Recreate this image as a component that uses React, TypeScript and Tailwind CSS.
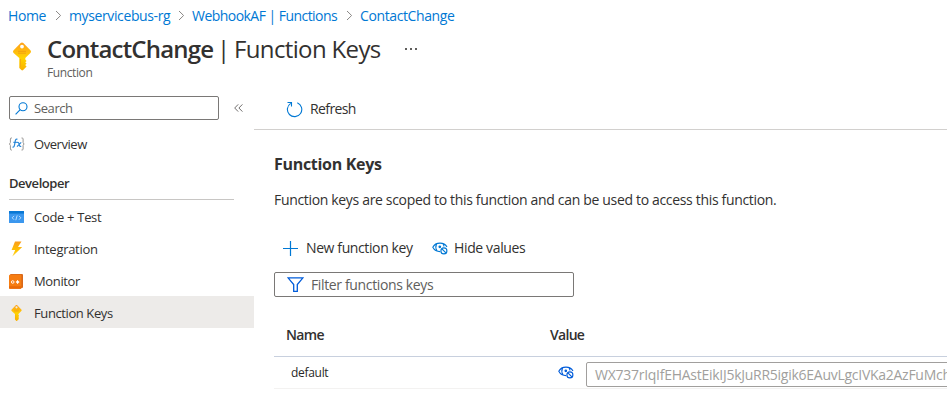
import type { ReactNode } from "react";

function Chevron() {
  return (
    <svg className="h-[11px] w-[7px] shrink-0" viewBox="0 0 7 11" fill="none" stroke="#8a8886" strokeWidth="1">
      <path d="M1 1l4.6 4.5L1 10" />
    </svg>
  );
}

function KeyIcon({ className }: { className: string }) {
  return (
    <svg className={className} viewBox="0 0 18 28">
      <defs>
        <linearGradient id="keyFill" x1="0" y1="0" x2="0" y2="1">
          <stop offset="0" stopColor="#fea11b" />
          <stop offset="0.3" stopColor="#ffb90f" />
          <stop offset="0.55" stopColor="#ffd400" />
          <stop offset="1" stopColor="#f9b000" />
        </linearGradient>
      </defs>
      <path
        fill="url(#keyFill)"
        fillRule="evenodd"
        d="M10.3.6l7.1 7.1c.8.8.8 1.9 0 2.7l-5.1 5.2v1.5l1.3 1.3-1.3 1.4 1.3 1.4-1.5 1.4 1.5 1.5-3.5 3.5c-.6.5-1.2.5-1.7 0l-2.1-2.2v-9.8L.6 10.400c-.8-.8-.8-1.900 0-2.700L7.700.6c.8-.8 1.800-.8 2.600 0zM9 2.200a1.900 1.900 0 1 0 0 3.800 1.900 1.900 0 0 0 0-3.800z"
      />
      <path d="M5 8.900h8M5 10.700h8" stroke="#f0a010" strokeWidth=".9" />
      <path d="M7.500 16.500v8" stroke="#f5a810" strokeWidth=".9" />
    </svg>
  );
}

function EyeIcon({ className }: { className: string }) {
  return (
    <svg className={className} viewBox="0 0 16 13" fill="none" stroke="currentColor" strokeWidth="1.100">
      <path d="M8.200 9.600C4.700 9.600 2.200 8 .8 5.300 2.200 2.600 4.700 1.100 8 1.100c3.200 0 5.600 1.400 7 3.900" />
      <path d="M4.500 1.700C3.600 4 3.700 6.800 5 8.900M11.200 1.800c.5.900.7 1.700.7 2.700" />
      <circle cx="7.800" cy="4.800" r=".8" fill="currentColor" />
      <circle cx="11.900" cy="8.900" r="3" />
      <path d="M9.900 6.900l4 4" />
    </svg>
  );
}

function FxIcon() {
  return (
    <svg className="h-[14px] w-[16px]" viewBox="0 0 16 14" fill="none">
      <path d="M3 1H2.300C1.600 1 1.400 1.400 1.400 2v3.500L.5 7l.9 1.500V12c0 .6.2 1 .9 1H3M12.500 1h.7c.7 0 .9.400.9 1v3.500L15 7l-.9 1.500V12c0 .6-.2 1-.9 1h-.7" stroke="#979593" />
      <path d="M8.500 2.200C6.500 1.500 6.300 3.500 5.900 6c-.4 2.500-.6 4.500-2.400 4.200M4.400 5.300h3.400M8 5.600c1.400-.8 1.800.3 2.200 1.900.3 1.400.8 2.500 2 1.700M12.200 5.300L8 9.600" stroke="#2b88d8" strokeWidth="1.200" />
    </svg>
  );
}

function CodeIcon() {
  return (
    <svg className="h-[12px] w-[15px]" viewBox="0 0 15 12">
      <rect width="15" height="12" rx=".6" fill="#3b97ee" />
      <path d="M0 0h15v2.600H0z" fill="#0a78d4" />
      <path d="M5 4.900L3.200 6.800 5 8.700M10 4.900l1.800 1.900L10 8.700M8.200 4.400L6.800 9.200" fill="none" stroke="#c4e4ff" strokeWidth=".9" />
    </svg>
  );
}

function BoltIcon() {
  return (
    <svg className="h-[16px] w-[16px]" viewBox="0 0 16 16">
      <defs>
        <linearGradient id="boltFill" x1="0" y1="0" x2="0" y2="1">
          <stop offset="0" stopColor="#fa9c1c" />
          <stop offset=".6" stopColor="#ffc400" />
          <stop offset="1" stopColor="#ffd83a" />
        </linearGradient>
      </defs>
      <path fill="url(#boltFill)" d="M6 .5h6.500L9 6h4.200L3.300 15.600 6.200 9H2.600z" />
    </svg>
  );
}

function MonitorIcon() {
  return (
    <svg className="h-[15px] w-[14px]" viewBox="0 0 14 15">
      <rect x="1" width="13" height="14" rx="1" fill="#d9681a" />
      <rect y=".7" width="12.400" height="14" rx="1" fill="#f67d12" />
      <path d="M0 12.300h12.400v1.400c0 .6-.4 1-1 1H1c-.6 0-1-.4-1-1z" fill="#e96a08" />
      <circle cx="3.700" cy="8" r="1.300" fill="none" stroke="#fff" strokeWidth=".9" />
      <path d="M8.600 6.200v3.600M6.900 8h3.400" fill="none" stroke="#fff" strokeWidth=".9" />
      <path d="M8.600 6.300L10.200 8 8.600 9.700 7 8z" fill="#fff" />
    </svg>
  );
}

function NavItem({ icon, label, tracking, active }: { icon: ReactNode; label: string; tracking: string; active?: boolean }) {
  return (
    <a className={`flex h-8 items-center pt-[2px] pl-[9px] text-[13px] ${active ? "bg-[#edebe9]" : ""}`}>
      <span className="flex w-[25px] shrink-0 items-center">{icon}</span>
      <span className={`pt-[2px] whitespace-nowrap ${tracking}`}>{label}</span>
    </a>
  );
}

export default function App() {
  return (
    <div className="flex h-[407px] w-[947px] flex-col overflow-hidden bg-white font-['Open_Sans','Noto_Sans',sans-serif] text-[#323130]">
      <nav className="flex h-[31px] shrink-0 items-center whitespace-nowrap pl-2 text-sm text-[#0078d4]">
        <a className="w-[47px] tracking-[-0.4px]">Home</a>
        <Chevron />
        <a className="ml-[7px] w-[102px] tracking-[-0.38px]">myservicebus-rg</a>
        <span className="ml-[7px] flex"><Chevron /></span>
        <a className="ml-[7px] w-[147px] tracking-[-0.54px]">WebhookAF | Functions</a>
        <span className="ml-[7px] flex"><Chevron /></span>
        <a className="ml-[7px] tracking-[-0.39px]">ContactChange</a>
      </nav>

      <header className="flex h-[55px] shrink-0 pl-[13px]">
        <KeyIcon className="mt-[11px] h-[29px] w-[18px]" />
        <div className="ml-4 pt-[2px]">
          <h1 className="flex h-[32px] items-center whitespace-nowrap text-2xl leading-8">
            <span className="w-[170px] font-semibold tracking-[-0.8px]">ContactChange</span>
            <span className="w-[17px]">|</span>
            <span className="w-[171px] tracking-[-0.64px]">Function Keys</span>
            <svg className="h-[2px] w-[12px]" viewBox="0 0 12 2" fill="#605e5c">
              <path d="M0 0h2v2H0zM5 0h2v2H5zM10 0h2v2h-2z" />
            </svg>
          </h1>
          <p className="text-xs leading-4 tracking-[-0.4px] text-[#605e5c]">Function</p>
        </div>
      </header>

      <div className="flex min-h-0 flex-1">
        <aside className="w-[254px] shrink-0">
          <div className="flex items-center pt-[10px] pl-[9px]">
            <div className="flex h-6 w-[210px] items-center rounded-[2px] border border-[#7a7876] pl-[5px] text-[13px] text-[#605e5c]">
              <svg className="h-[13px] w-[13px]" viewBox="0 0 13 13" fill="none" stroke="#0078d4" strokeWidth="1.100">
                <circle cx="8" cy="4.800" r="4" />
                <path d="M5.200 7.700L.6 12.300" />
              </svg>
              <span className="ml-[6px] pt-[2px] tracking-[-0.42px]">Search</span>
            </div>
            <svg className="ml-[15px] h-[8px] w-[9px]" viewBox="0 0 9 8" fill="none" stroke="#605e5c" strokeWidth=".9">
              <path d="M4.200.4L.7 4l3.500 3.600M8.400.4L4.900 4l3.500 3.600" />
            </svg>
          </div>
          <div className="pt-[7px]">
            <NavItem icon={<FxIcon />} label="Overview" tracking="tracking-[-0.45px]" />
          </div>
          <h2 className="mt-[7px] ml-[9px] flex h-[34px] w-[225px] items-center border-b border-[#c8c6c4] pt-[2px] text-[13px] font-semibold tracking-[-0.45px]">Developer</h2>
          <div>
            <NavItem icon={<CodeIcon />} label="Code + Test" tracking="tracking-[-0.31px]" />
            <NavItem icon={<BoltIcon />} label="Integration" tracking="tracking-[-0.29px]" />
            <NavItem icon={<MonitorIcon />} label="Monitor" tracking="tracking-[-0.36px]" />
            <NavItem icon={<KeyIcon className="ml-[2px] h-[16px] w-[11px]" />} label="Function Keys" tracking="tracking-[-0.4px]" active />
          </div>
        </aside>

        <main className="min-w-0 flex-1 overflow-hidden">
          <div className="flex h-[44px] items-center border-b border-[#d2d0ce] pt-[3px] pl-[32px] text-sm">
            <svg className="h-[17px] w-[17px]" viewBox="0 0 17 17" fill="none" stroke="#0078d4" strokeWidth="1.100">
              <path d="M11.300 1.800A7.200 7.200 0 1 1 4.700 2.400M1.500 1.500h4v4" />
            </svg>
            <span className="ml-[7px] tracking-[-0.6px]">Refresh</span>
          </div>
          <div className="pl-5">
            <h2 className="mt-[22px] text-base leading-6 font-bold tracking-[-0.3px]">Function Keys</h2>
            <p className="mt-[14px] text-sm leading-5 tracking-[-0.33px] whitespace-nowrap">
              Function keys are scoped to this function and can be used to access this function.
            </p>
            <div className="mt-[25px] flex h-[26px] items-center pl-[9px] text-sm whitespace-nowrap">
              <svg className="h-[15px] w-[15px]" viewBox="0 0 15 15" stroke="#0078d4" strokeWidth="1.200">
                <path d="M7.500 0v15M0 7.500h15" />
              </svg>
              <span className="ml-[8px] w-[126px] tracking-[-0.39px]">New function key</span>
              <EyeIcon className="h-[13px] w-[16px] text-[#0078d4]" />
              <span className="ml-[6px] tracking-[-0.36px]">Hide values</span>
            </div>
            <div className="mt-[11px] flex h-[25px] w-[300px] items-center rounded-[2px] border border-[#7a7876] pl-[12px] text-sm text-[#605e5c]">
              <svg className="h-[15px] w-[17px]" viewBox="0 0 17 15" fill="none" stroke="#015cda" strokeWidth="1.300">
                <path d="M1 .8h15L10.300 7.600v6.700H6.700V7.600z" />
              </svg>
              <span className="ml-[7px] pt-px tracking-[-0.36px]">Filter functions keys</span>
            </div>
            <div className="mt-[12px] flex h-[48px] items-center border-b border-[#c8d0de] pt-[4px] pl-[12px] text-sm font-semibold">
              <span className="w-[264px] tracking-[-0.65px]">Name</span>
              <span className="tracking-[-0.7px]">Value</span>
            </div>
            <div className="flex h-[32px] items-center border-b border-[#f3f2f1] pl-[17px]">
              <span className="w-[267px] shrink-0 text-xs tracking-[-0.3px] text-[#292827]">default</span>
              <EyeIcon className="h-[13px] w-[16px] shrink-0 text-[#015cda]" />
              <div className="mt-[4px] ml-[12px] flex h-[25px] w-[420px] shrink-0 items-center rounded-[2px] border border-[#a19f9d] pl-2 text-sm tracking-[-0.267px] whitespace-nowrap text-[#a19f9d]">
                WX737rIqIfEHAstEikIJ5kJuRR5igik6EAuvLgcIVKa2AzFuMch
              </div>
            </div>
          </div>
        </main>
      </div>
    </div>
  );
}
